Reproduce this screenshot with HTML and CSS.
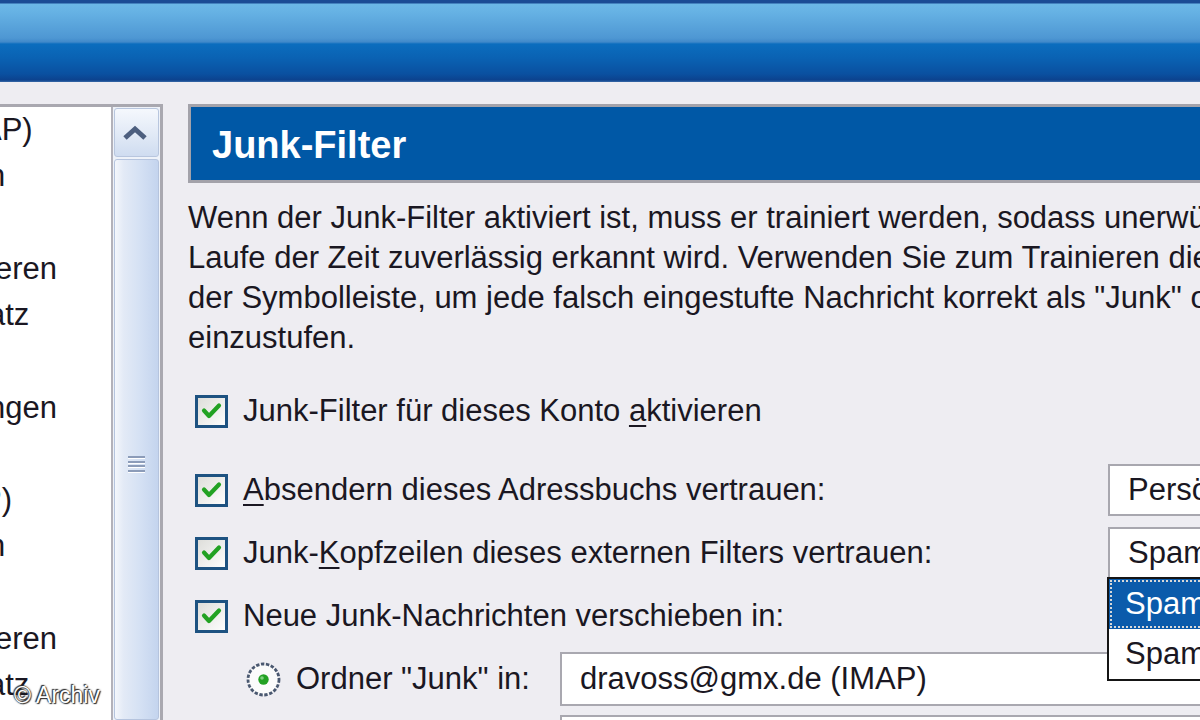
FILE: index.html
```html
<!DOCTYPE html>
<html lang="de">
<head>
<meta charset="utf-8">
<title>Junk-Filter</title>
<link rel="stylesheet" href="styles.css">
</head>
<body>
<div class="titlebar"></div>
<div class="main">
  <div class="sidebar">
    <ul class="tree">
      <li class="far">AP)</li>
      <li>n</li>
      <li></li>
      <li>ieren</li>
      <li>atz</li>
      <li></li>
      <li>ngen</li>
      <li></li>
      <li class="far">P)</li>
      <li>n</li>
      <li></li>
      <li>ieren</li>
      <li>atz</li>
    </ul>
    <div class="scrollbar">
      <div class="sb-btn">
        <svg width="26" height="16" viewBox="0 0 26 16"><polyline points="3,13 13,4 23,13" fill="none" stroke="#4d5f7f" stroke-width="5"/></svg>
      </div>
      <div class="sb-thumb">
        <div class="grip"><i></i><i></i><i></i><i></i></div>
      </div>
    </div>
  </div>

  <div class="content">
    <div class="header"><h1>Junk-Filter</h1></div>
    <p class="intro">Wenn der Junk-Filter aktiviert ist, muss er trainiert werden, sodass unerwünschte Nachrichten im<br>Laufe der Zeit zuverlässig erkannt wird. Verwenden Sie zum Trainieren die Schaltfläche "Junk" in<br>der Symbolleiste, um jede falsch eingestufte Nachricht korrekt als "Junk" oder "Kein Junk"<br>einzustufen.</p>

    <div class="row first">
      <label class="check">
        <svg class="cb" width="33" height="33" viewBox="0 0 33 33"><defs><linearGradient id="cbg" x1="0" y1="0" x2="1" y2="1"><stop offset="0" stop-color="#dcdcd8"/><stop offset="1" stop-color="#ffffff"/></linearGradient></defs><rect x="1.5" y="1.5" width="30" height="30" fill="url(#cbg)" stroke="#1d5281" stroke-width="3"/><path d="M9 15.5 L14 21 L24 10.5" fill="none" stroke="#22a222" stroke-width="4.2" stroke-linecap="round" stroke-linejoin="round"/></svg>
        <span>Junk-Filter für dieses Konto <u>a</u>ktivieren</span>
      </label>
    </div>

    <div class="row">
      <label class="check">
        <svg class="cb" width="33" height="33" viewBox="0 0 33 33"><rect x="1.5" y="1.5" width="30" height="30" fill="url(#cbg)" stroke="#1d5281" stroke-width="3"/><path d="M9 15.5 L14 21 L24 10.5" fill="none" stroke="#22a222" stroke-width="4.2" stroke-linecap="round" stroke-linejoin="round"/></svg>
        <span><u>A</u>bsendern dieses Adressbuchs vertrauen:</span>
      </label>
      <div class="menulist">Persönliches Adressbuch</div>
    </div>

    <div class="row">
      <label class="check">
        <svg class="cb" width="33" height="33" viewBox="0 0 33 33"><rect x="1.5" y="1.5" width="30" height="30" fill="url(#cbg)" stroke="#1d5281" stroke-width="3"/><path d="M9 15.5 L14 21 L24 10.5" fill="none" stroke="#22a222" stroke-width="4.2" stroke-linecap="round" stroke-linejoin="round"/></svg>
        <span>Junk-<u>K</u>opfzeilen dieses externen Filters vertrauen:</span>
      </label>
      <div class="menulist">SpamAssassin
        <ul class="popup">
          <li class="sel">SpamAssassin</li>
          <li>SpamPal</li>
        </ul>
      </div>
    </div>

    <div class="row">
      <label class="check">
        <svg class="cb" width="33" height="33" viewBox="0 0 33 33"><rect x="1.5" y="1.5" width="30" height="30" fill="url(#cbg)" stroke="#1d5281" stroke-width="3"/><path d="M9 15.5 L14 21 L24 10.5" fill="none" stroke="#22a222" stroke-width="4.2" stroke-linecap="round" stroke-linejoin="round"/></svg>
        <span>Neue Junk-Nachrichten verschieben in:</span>
      </label>
    </div>

    <div class="row radio-row">
      <svg class="rb" width="35" height="35" viewBox="0 0 35 35"><circle cx="17.5" cy="17.5" r="15.5" fill="#fbfbfb" stroke="#4a5870" stroke-width="2.8" stroke-dasharray="3.4 1.6"/><circle cx="17.5" cy="17.5" r="5.2" fill="#23a123"/><circle cx="16" cy="16" r="1.8" fill="#7fd07f"/></svg>
      <span class="rlabel">Ordner "Junk" in:</span>
      <div class="field">dravoss@gmx.de (IMAP)</div>
    </div>

    <div class="row radio-row">
      <svg class="rb" width="35" height="35" viewBox="0 0 35 35"><circle cx="17.5" cy="17.5" r="15.5" fill="#fbfbfb" stroke="#4a5870" stroke-width="2.8"/></svg>
      <span class="rlabel">Anderer Ordner:</span>
      <div class="field">Junk in dravoss@gmx.de</div>
    </div>
  </div>

  <div class="watermark">© Archiv</div>
</div>
</body>
</html>
```

FILE: styles.css
```css
* { box-sizing: border-box; }

html, body {
  margin: 0;
  padding: 0;
}

body {
  width: 1200px;
  height: 720px;
  overflow: hidden;
  background: #eeedf2;
  font-family: "Liberation Sans", Arial, sans-serif;
  font-size: 31px;
  color: #1a1722;
  position: relative;
}

.titlebar {
  height: 82px;
  background: linear-gradient(to bottom,
    #1b4c95 0px, #1b4c95 3px,
    #6cb8e7 4px, #66b2e4 12px,
    #4e97d3 38px, #4189ca 42px,
    #0b6dbe 44px, #0a62b3 58px,
    #0a50a0 74px, #0c428e 80px,
    #3a6aa8 82px);
}

.main {
  display: flex;
  padding-top: 22px;
  height: 638px;
  overflow: hidden;
}

/* ---------- left tree + scrollbar ---------- */
.sidebar {
  display: flex;
  width: 163px;
  flex-shrink: 0;
  border-top: 3px solid #a9a8b0;
  height: 616px;
}

.tree {
  list-style: none;
  margin: 0;
  padding: 0;
  width: 113px;
  background: #ffffff;
  border-right: 2px solid #b3b2ba;
  overflow: hidden;
  white-space: nowrap;
}

.tree li {
  height: 46.25px;
  line-height: 46.25px;
  margin-left: -12px;
}

.tree li.far {
  margin-left: -19px;
}

.scrollbar {
  width: 50px;
  display: flex;
  flex-direction: column;
  padding: 1px 1px 0 1px;
  background: #eef2f9;
  border-right: 3px solid #a9a8b0;
}

.sb-btn {
  height: 49px;
  border: 1px solid #b8c6de;
  border-radius: 3px;
  background: linear-gradient(to bottom, #f5f8fd, #dbe5f4 70%, #cfdcf0);
  display: flex;
  align-items: center;
  justify-content: center;
  padding-right: 4px;
}

.sb-thumb {
  flex: 1;
  margin-top: 2px;
  border: 1px solid #b5c4de;
  border-radius: 3px;
  background: linear-gradient(to right, #f4f7fc 0, #e3eaf6 20%, #d6e2f4 55%, #c4d4ee 100%);
  padding-top: 296px;
  display: flex;
  justify-content: center;
}

.grip {
  display: flex;
  flex-direction: column;
  gap: 2.5px;
  width: 17px;
  height: 18px;
}

.grip i {
  display: block;
  height: 2px;
  background: #8c9cb9;
  box-shadow: 0 1px 0 #ffffff;
}

/* ---------- right content ---------- */
.content {
  margin-left: 25px;
  width: 1120px;
  flex-shrink: 0;
}

.header {
  height: 79px;
  border: 3px solid #a3a2aa;
  background: #0058a6;
  display: flex;
  align-items: center;
  padding-left: 21px;
}

.header h1 {
  margin: 0;
  font-size: 38px;
  font-weight: bold;
  color: #ffffff;
  line-height: 1;
  padding-top: 2px;
}

.intro {
  margin: 15px 0 0 0;
  line-height: 40px;
  white-space: nowrap;
}

.row {
  display: grid;
  grid-template-columns: 920px 300px;
  align-items: center;
  height: 63px;
}

.row.first {
  margin-top: 21.5px;
  margin-bottom: 16px;
}

.check {
  display: flex;
  align-items: center;
  gap: 15px;
  padding-left: 7px;
  line-height: 38.5px;
  white-space: nowrap;
}

.cb {
  flex-shrink: 0;
  display: block;
}

u {
  text-decoration-thickness: 2px;
  text-underline-offset: 4px;
}

.menulist {
  position: relative;
  height: 52px;
  line-height: 48px;
  border: 2px solid #a8a7af;
  background: #ffffff;
  padding-left: 18px;
  white-space: nowrap;
}

.popup {
  position: absolute;
  top: 100%;
  left: -3px;
  width: 300px;
  margin: 0;
  padding: 0;
  list-style: none;
  background: #ffffff;
  border: 2px solid #151515;
  z-index: 2;
}

.popup li {
  height: 50px;
  line-height: 50px;
  padding-left: 16px;
}

.popup li.sel {
  background: #0b5bab;
  color: #ffffff;
  outline: 2px dotted #d8d8d8;
  outline-offset: -3px;
}

.radio-row {
  display: flex;
  align-items: center;
  padding-left: 58px;
}

.rb {
  flex-shrink: 0;
  display: block;
}

.rlabel {
  width: 279px;
  padding-left: 15px;
  flex-shrink: 0;
  white-space: nowrap;
}

.field {
  height: 54px;
  width: 700px;
  line-height: 50px;
  border: 2px solid #a9a8b0;
  background: #ffffff;
  padding-left: 18px;
  white-space: nowrap;
}

.watermark {
  position: absolute;
  left: 14px;
  top: 682px;
  font-size: 23px;
  color: #ffffff;
  text-shadow: 0 0 2px #2a2a2a, 1px 1px 1px #2a2a2a, -1px -1px 1px #2a2a2a;
  z-index: 3;
}
```
